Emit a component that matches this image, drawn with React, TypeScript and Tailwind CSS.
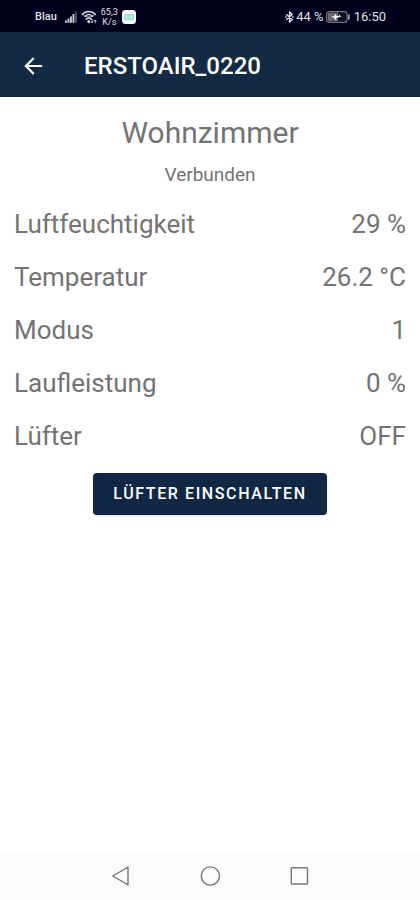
import React, { useState } from 'react';

interface ReadingProps {
  label: string;
  value: string;
}

const Reading = ({ label, value }: ReadingProps) => (
  <div className="flex items-center justify-between h-[53px]">
    <dt>{label}</dt>
    <dd>{value}</dd>
  </div>
);

const SignalIcon = () => (
  <svg className="w-3 h-3" viewBox="0 0 12 12" fill="#c9c9d2">
    <rect x="0" y="9.4" width="1.9" height="2.4" />
    <rect x="2.5" y="7.6" width="1.9" height="4.2" />
    <rect x="5" y="5.4" width="1.9" height="6.4" />
    <rect x="7.5" y="3" width="1.9" height="8.8" />
    <rect x="10" y="0.6" width="1.9" height="11.2" fill="#50505f" />
  </svg>
);

const WifiIcon = () => (
  <svg className="w-4 h-4" viewBox="0 0 16 16" fill="none" stroke="#d5d5dc" strokeWidth="1.5" strokeLinecap="round">
    <path d="M1.2 5.4C4.8 1.4 10.8 1.4 14.4 5.4" />
    <path d="M2.8 6.6C5.4 8.6 10.2 8.6 12.8 6.6" strokeWidth="1" />
    <path d="M4.2 7.2C6.4 5.2 9.2 5.2 11.4 7.2" />
    <path d="M5.2 10.2C6.8 9 8.8 9 10.4 10.2" />
    <circle cx="7.8" cy="12.6" r="0.8" fill="#d5d5dc" />
    <path d="M11.2 11v2.6M10.4 12.8l.8.9.8-.9M14.2 13.8v-2.6M13.4 12l.8-.9.8.9" strokeWidth="0.9" />
  </svg>
);

const AppBadgeIcon = () => (
  <svg className="w-[14px] h-[14px]" viewBox="0 0 14 14" fill="none">
    <rect width="14" height="14" rx="3.5" fill="#f7fbfb" />
    <rect x="1.8" y="3.8" width="10.4" height="6.4" rx="3.2" fill="#9fdcd8" />
    <path d="M5.6 5.4L4 7l1.6 1.6M8.4 5.4L10 7 8.4 8.6M6.4 7h1.2" stroke="#eefafa" strokeWidth="0.9" />
  </svg>
);

const BluetoothIcon = () => (
  <svg className="w-[9px] h-3" viewBox="0 0 9 12" fill="none" stroke="#e4e4ea" strokeWidth="1.4" strokeLinejoin="round">
    <path d="M1.2 3.2L7.2 8.6 4.6 11V1l2.6 2.4L1.2 8.8" />
    <path d="M0.2 6h1.4M7.2 6h1.4" />
  </svg>
);

const BatteryIcon = () => (
  <svg className="w-6 h-3" viewBox="0 0 24 12">
    <rect x="0.6" y="0.6" width="20.4" height="10.8" rx="2.6" fill="#11111f" stroke="#74747f" strokeWidth="1.2" />
    <path d="M3 1.8h9v8.4H3a1.2 1.2 0 01-1.2-1.2V3A1.2 1.2 0 013 1.8z" fill="#696974" />
    <rect x="22" y="3.2" width="1.8" height="5.6" rx="0.8" fill="#9b9ba5" />
    <path d="M4.8 5.6l3.6-.4.8-2.4 1.4 2.2 1.6.2 1.6-1.8.6 1.8 1.6.4-5.4 1.2-1.2 2.6-1-2.4z" fill="#ffffff" />
  </svg>
);

const StatusBar = () => (
  <div className="flex items-center justify-between h-8 pl-[35px] pr-[34px] pt-px bg-[#00001e] text-[#e0e0e6]">
    <div className="flex items-center">
      <span className="text-[11px] font-medium leading-3">Blau</span>
      <div className="flex items-center gap-1 ml-2">
        <SignalIcon />
        <WifiIcon />
        <span className="flex flex-col items-center text-[9px] leading-[10px]">
          <span>65,3</span>
          <span>K/s</span>
        </span>
        <AppBadgeIcon />
      </div>
    </div>
    <div className="flex items-center gap-[2px] text-[13px]">
      <BluetoothIcon />
      <span>44 %</span>
      <BatteryIcon />
      <span className="ml-[2px]">16:50</span>
    </div>
  </div>
);

const AppBar = () => (
  <header className="flex items-center h-[65px] px-5 pt-[2px] gap-[38px] bg-[#122a44] text-white">
    <button type="button" aria-label="Zurück">
      <svg className="w-[26px] h-[26px]" viewBox="0 0 24 24" fill="currentColor">
        <path d="M20.5 11H7.83l5.59-5.59L12 4l-8 8 8 8 1.41-1.41L7.83 13H20.5v-2z" />
      </svg>
    </button>
    <h1 className="text-2xl font-medium">ERSTOAIR_0220</h1>
  </header>
);

const NavigationBar = () => (
  <nav className="flex items-center justify-center gap-[66px] h-12 bg-[#fbfbfb] text-[#77777a]">
    <button type="button" aria-label="Zurück">
      <svg className="w-6 h-6" viewBox="0 0 24 24" fill="none" stroke="currentColor" strokeWidth="1.4" strokeLinejoin="round">
        <path d="M20 3.2v17.6L4.8 12z" />
      </svg>
    </button>
    <button type="button" aria-label="Startseite">
      <svg className="w-6 h-6" viewBox="0 0 24 24" fill="none" stroke="currentColor" strokeWidth="1.4">
        <circle cx="12.4" cy="12" r="9.1" />
      </svg>
    </button>
    <button type="button" aria-label="Letzte Apps">
      <svg className="w-6 h-6" viewBox="0 0 24 24" fill="none" stroke="currentColor" strokeWidth="1.4">
        <rect x="3.3" y="3.8" width="16.2" height="16.2" rx="0.8" />
      </svg>
    </button>
  </nav>
);

const App = () => {
  const [fanOn, setFanOn] = useState(false);

  return (
    <div className="min-h-screen flex flex-col bg-white font-[Roboto,sans-serif]">
      <StatusBar />
      <AppBar />

      <main className="flex-grow flex flex-col px-[14px] pt-4 text-[#737373]">
        <h2 className="text-center text-[30px] leading-10">Wohnzimmer</h2>
        <p className="text-center text-[19px] leading-6 mt-[10px]">Verbunden</p>

        <dl className="mt-[10px] text-[26px] leading-8">
          <Reading label="Luftfeuchtigkeit" value="29 %" />
          <Reading label="Temperatur" value="26.2 °C" />
          <Reading label="Modus" value="1" />
          <Reading label="Laufleistung" value="0 %" />
          <Reading label="Lüfter" value={fanOn ? 'ON' : 'OFF'} />
        </dl>

        <button
          type="button"
          onClick={() => setFanOn(!fanOn)}
          className="self-center mt-[11px] h-[42px] px-5 rounded bg-[#102844] text-white text-base font-medium tracking-widest uppercase shadow-sm"
        >
          {fanOn ? 'Lüfter ausschalten' : 'Lüfter einschalten'}
        </button>
      </main>

      <NavigationBar />
    </div>
  );
};

export default App;
